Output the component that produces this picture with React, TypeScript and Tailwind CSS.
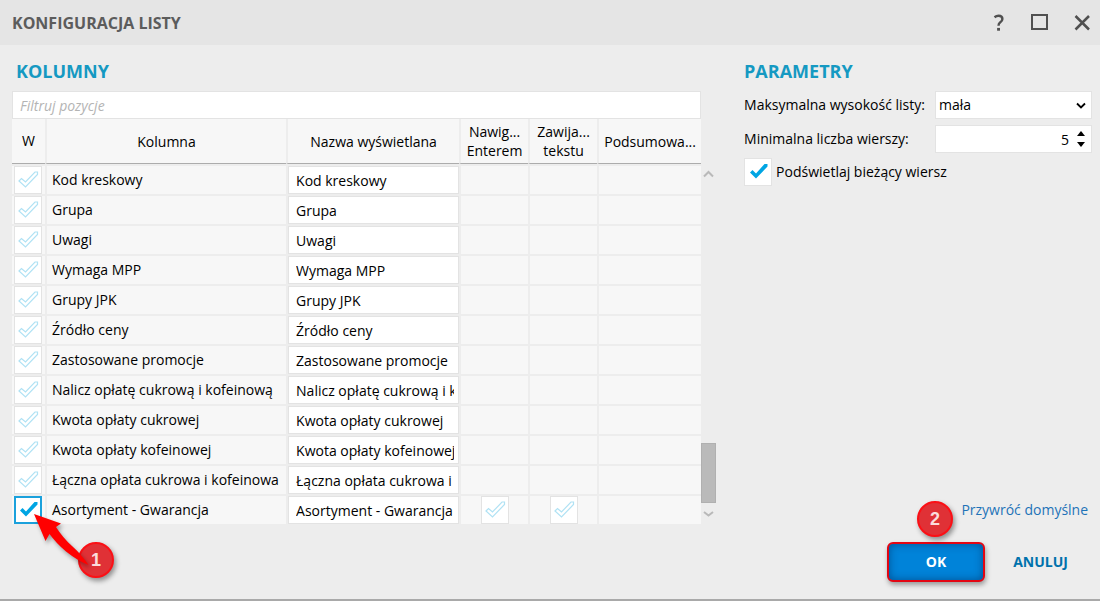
import { useState } from "react";
import clsx from "clsx";

interface ColumnRow {
  name: string;
  visible: boolean;
  options?: boolean;
}

const initialRows: ColumnRow[] = [
  { name: "Kod kreskowy", visible: false },
  { name: "Grupa", visible: false },
  { name: "Uwagi", visible: false },
  { name: "Wymaga MPP", visible: false },
  { name: "Grupy JPK", visible: false },
  { name: "Źródło ceny", visible: false },
  { name: "Zastosowane promocje", visible: false },
  { name: "Nalicz opłatę cukrową i kofeinową", visible: false },
  { name: "Kwota opłaty cukrowej", visible: false },
  { name: "Kwota opłaty kofeinowej", visible: false },
  { name: "Łączna opłata cukrowa i kofeinowa", visible: false },
  { name: "Asortyment - Gwarancja", visible: true, options: true },
];

interface CheckBoxProps {
  label: string;
  id?: string;
  defaultChecked?: boolean;
  highlighted?: boolean;
}

function CheckBox({ label, id, defaultChecked = false, highlighted = false }: CheckBoxProps) {
  const [checked, setChecked] = useState(defaultChecked);

  return (
    <span className="relative block size-7">
      <input
        type="checkbox"
        id={id}
        aria-label={id ? undefined : label}
        checked={checked}
        onChange={(e) => setChecked(e.target.checked)}
        className={clsx(
          "block size-7 appearance-none bg-white",
          highlighted ? "border-2 border-[#1ba1dc]" : "border border-[#e3e3e3]"
        )}
      />
      <svg viewBox="0 0 28 28" className="pointer-events-none absolute inset-0 size-7" aria-hidden="true">
        {checked ? (
          <path d="M6 14.5 L8.5 12 L12 15.5 L20.5 6 H23.5 V8.5 L12 20.5 Z" fill="#00a5e3" />
        ) : (
          <path
            d="M5 15 L7.5 12.5 L11.5 16 L21 6 H23.5 V8.5 L11.5 21 Z"
            fill="none"
            stroke="#b0e2f4"
            strokeWidth="1.2"
          />
        )}
      </svg>
    </span>
  );
}

function StepBadge({ value }: { value: number }) {
  return (
    <span className="flex size-9 items-center justify-center rounded-full border-2 border-[#fb1016] bg-[#e03136] font-['Liberation_Sans',sans-serif] text-lg font-bold leading-none text-[#fbdcdc] shadow-[2px_3px_5px_rgba(0,0,0,0.4)]">
      {value}
    </span>
  );
}

function StepArrow() {
  return (
    <svg
      viewBox="0 0 60 56"
      className="absolute left-0 top-0 h-14 w-[60px] overflow-visible drop-shadow-[2px_3px_2px_rgba(0,0,0,0.35)]"
      aria-hidden="true"
    >
      <path
        d="M0 0 L27 9.5 L22 13 Q29 24 38 32 Q48 41 54.5 51 Q44 47 32 37.5 Q22 29 15.5 20 L11.5 27 Z"
        fill="#ff0000"
      />
    </svg>
  );
}

function TitleBar() {
  return (
    <header className="flex h-[45px] items-center justify-between bg-[#e5e5e5] pl-3 pr-2 text-[#5c5c5c]">
      <h1 className="text-base font-bold">KONFIGURACJA LISTY</h1>
      <div className="flex items-center gap-[22px]">
        <button type="button" aria-label="Pomoc" className="flex h-6 w-5 items-center justify-center">
          <svg viewBox="0 0 12 18" className="h-[18px] w-3" fill="none" stroke="#505050" strokeWidth="2.4">
            <path d="M2.5 3.2 Q4.4 1.7 6.6 1.7 Q10.4 1.7 10.4 5 Q10.4 6.9 8.3 8.3 Q6.5 9.5 6.5 11.8" />
            <path d="M5.1 15.3 H8" strokeWidth="2.8" />
          </svg>
        </button>
        <button type="button" aria-label="Maksymalizuj" className="flex h-6 w-5 items-center justify-center">
          <svg viewBox="0 0 18 18" className="size-[18px]" fill="none" stroke="#505050" strokeWidth="2">
            <rect x="1" y="1" width="15" height="14" />
          </svg>
        </button>
        <button type="button" aria-label="Zamknij" className="flex h-6 w-5 items-center justify-center">
          <svg viewBox="0 0 18 18" className="size-[18px]" fill="none" stroke="#505050" strokeWidth="2.5">
            <path d="M2.5 2 L16 15.5 M16 2 L2.5 15.5" />
          </svg>
        </button>
      </div>
    </header>
  );
}

const headCell = "border-l-2 border-[#ededed] bg-[#f7f7f7] bg-clip-padding p-0 font-normal leading-[19px]";
const bodyCell = "h-[30px] border-l-2 border-t-2 border-[#ededed] bg-[#f7f7f7] bg-clip-padding p-0";

function ColumnsTable() {
  return (
    <table className="w-full table-fixed border-separate border-spacing-0">
      <colgroup>
        <col className="w-[33px]" />
        <col />
        <col className="w-[173px]" />
        <col className="w-[69px]" />
        <col className="w-[69px]" />
        <col className="w-[104px]" />
      </colgroup>
      <thead>
        <tr className="h-[45px] *:border-b *:border-b-[#acacac]">
          <th className="bg-[#f7f7f7] p-0 font-normal">W</th>
          <th className={headCell}>Kolumna</th>
          <th className={headCell}>Nazwa wyświetlana</th>
          <th className={headCell}>
            Nawig...
            <br />
            Enterem
          </th>
          <th className={headCell}>
            Zawija...
            <br />
            tekstu
          </th>
          <th className={headCell}>Podsumowa...</th>
        </tr>
      </thead>
      <tbody>
        {initialRows.map((row) => (
          <tr key={row.name}>
            <td className="h-[30px] border-t-2 border-[#ededed] bg-[#f7f7f7] bg-clip-padding p-0">
              <div className="relative ml-0.5">
                <CheckBox label={row.name} defaultChecked={row.visible} highlighted={row.visible} />
                {row.visible && (
                  <div className="pointer-events-none absolute left-5 top-[18px] z-10">
                    <div className="absolute left-11 top-7">
                      <StepBadge value={1} />
                    </div>
                    <StepArrow />
                  </div>
                )}
              </div>
            </td>
            <td className={clsx(bodyCell, "truncate pl-[5px]")}>{row.name}</td>
            <td className={bodyCell}>
              <input
                type="text"
                aria-label={`Nazwa wyświetlana: ${row.name}`}
                defaultValue={row.name}
                className="block h-7 w-full border border-[#e3e3e3] bg-white pl-[7px] pr-1"
              />
            </td>
            <td className={bodyCell}>
              {row.options && (
                <div className="flex justify-center">
                  <CheckBox label="Nawigacja Enterem" />
                </div>
              )}
            </td>
            <td className={bodyCell}>
              {row.options && (
                <div className="flex justify-center">
                  <CheckBox label="Zawijanie tekstu" />
                </div>
              )}
            </td>
            <td className={bodyCell} />
          </tr>
        ))}
      </tbody>
    </table>
  );
}

function ScrollBar() {
  return (
    <div className="mt-[106px] flex h-[360px] w-[15px] flex-col items-center" aria-hidden="true">
      <svg viewBox="0 0 15 20" className="h-5 w-[15px]" fill="none" stroke="#b9b9b9" strokeWidth="2">
        <path d="M3 13.5 L7.5 9 L12 13.5" />
      </svg>
      <div className="grow" />
      <div className="h-[60px] w-full border border-[#b0b0b0] bg-[#bababa]" />
      <svg viewBox="0 0 15 20" className="h-5 w-[15px]" fill="none" stroke="#b9b9b9" strokeWidth="2">
        <path d="M3 9 L7.5 12.5 L12 9" />
      </svg>
    </div>
  );
}

function Parameters() {
  const [minRows, setMinRows] = useState(5);

  return (
    <div>
      <h2 className="mb-1.5 text-lg font-bold leading-7 text-[#1599c2]">PARAMETRY</h2>
      <div className="flex h-7 items-center justify-between">
        <label htmlFor="max-height">Maksymalna wysokość listy:</label>
        <div className="relative w-[157px]">
          <select
            id="max-height"
            defaultValue="mała"
            className="block h-7 w-full appearance-none border border-[#e3e3e3] bg-white pl-[3px]"
          >
            <option>mała</option>
            <option>średnia</option>
            <option>duża</option>
          </select>
          <svg
            viewBox="0 0 10 8"
            className="pointer-events-none absolute right-1.5 top-[11px] h-2 w-2.5"
            fill="none"
            stroke="#000"
            strokeWidth="1.8"
          >
            <path d="M1 1.5 L5 5.5 L9 1.5" />
          </svg>
        </div>
      </div>
      <div className="mt-1.5 flex h-7 items-center justify-between">
        <label htmlFor="min-rows">Minimalna liczba wierszy:</label>
        <div className="flex h-7 w-[157px] items-center border border-[#e3e3e3] bg-white pr-1.5">
          <input
            id="min-rows"
            type="text"
            inputMode="numeric"
            value={minRows}
            onChange={(e) => setMinRows(Number(e.target.value) || 0)}
            className="h-full min-w-0 grow text-right"
          />
          <div className="ml-2 flex flex-col gap-1.5">
            <button type="button" aria-label="Zwiększ" onClick={() => setMinRows(minRows + 1)}>
              <svg viewBox="0 0 8 5" className="block h-[5px] w-2">
                <path d="M0 5 L4 0 L8 5 Z" />
              </svg>
            </button>
            <button type="button" aria-label="Zmniejsz" onClick={() => setMinRows(Math.max(0, minRows - 1))}>
              <svg viewBox="0 0 8 5" className="block h-[5px] w-2">
                <path d="M0 0 L4 5 L8 0 Z" />
              </svg>
            </button>
          </div>
        </div>
      </div>
      <div className="mt-[5px] flex items-center gap-1">
        <CheckBox id="highlight-row" label="Podświetlaj bieżący wiersz" defaultChecked />
        <label htmlFor="highlight-row">Podświetlaj bieżący wiersz</label>
      </div>
    </div>
  );
}

export default function App() {
  return (
    <div className="flex min-h-screen flex-col border-b-2 border-[#a9a9a9] bg-[#ededed] font-['Open_Sans','Noto_Sans',sans-serif] text-sm leading-5 text-black">
      <TitleBar />
      <main className="flex grow gap-7 pl-3 pr-2 pt-3">
        <section className="flex grow">
          <div className="grow">
            <h2 className="mb-1.5 pl-1 text-lg font-bold leading-7 text-[#1599c2]">KOLUMNY</h2>
            <input
              type="text"
              aria-label="Filtruj pozycje"
              placeholder="Filtruj pozycje"
              className="block h-7 w-full border border-[#e3e3e3] bg-white px-[7px] placeholder:italic placeholder:text-[#b4b4b4]"
            />
            <ColumnsTable />
          </div>
          <ScrollBar />
        </section>
        <aside className="flex w-[348px] shrink-0 flex-col justify-between pb-[17px]">
          <Parameters />
          <div className="flex flex-col items-end">
            <a href="#restore" className="mb-[22px] mr-1 text-[#1e73b8]">
              Przywróć domyślne
            </a>
            <div className="flex items-center gap-1">
              <div className="relative">
                <button
                  type="button"
                  className="h-10 w-[98px] rounded-md border-2 border-[#e30613] bg-[#0083d9] font-bold text-white shadow-[inset_0_0_8px_rgba(0,40,90,0.55),1px_3px_5px_rgba(0,0,0,0.35)]"
                >
                  OK
                </button>
                <div className="pointer-events-none absolute -top-[41px] left-[30px]">
                  <StepBadge value={2} />
                </div>
              </div>
              <button type="button" className="h-10 w-[103px] font-bold text-[#0072ac]">
                ANULUJ
              </button>
            </div>
          </div>
        </aside>
      </main>
    </div>
  );
}
